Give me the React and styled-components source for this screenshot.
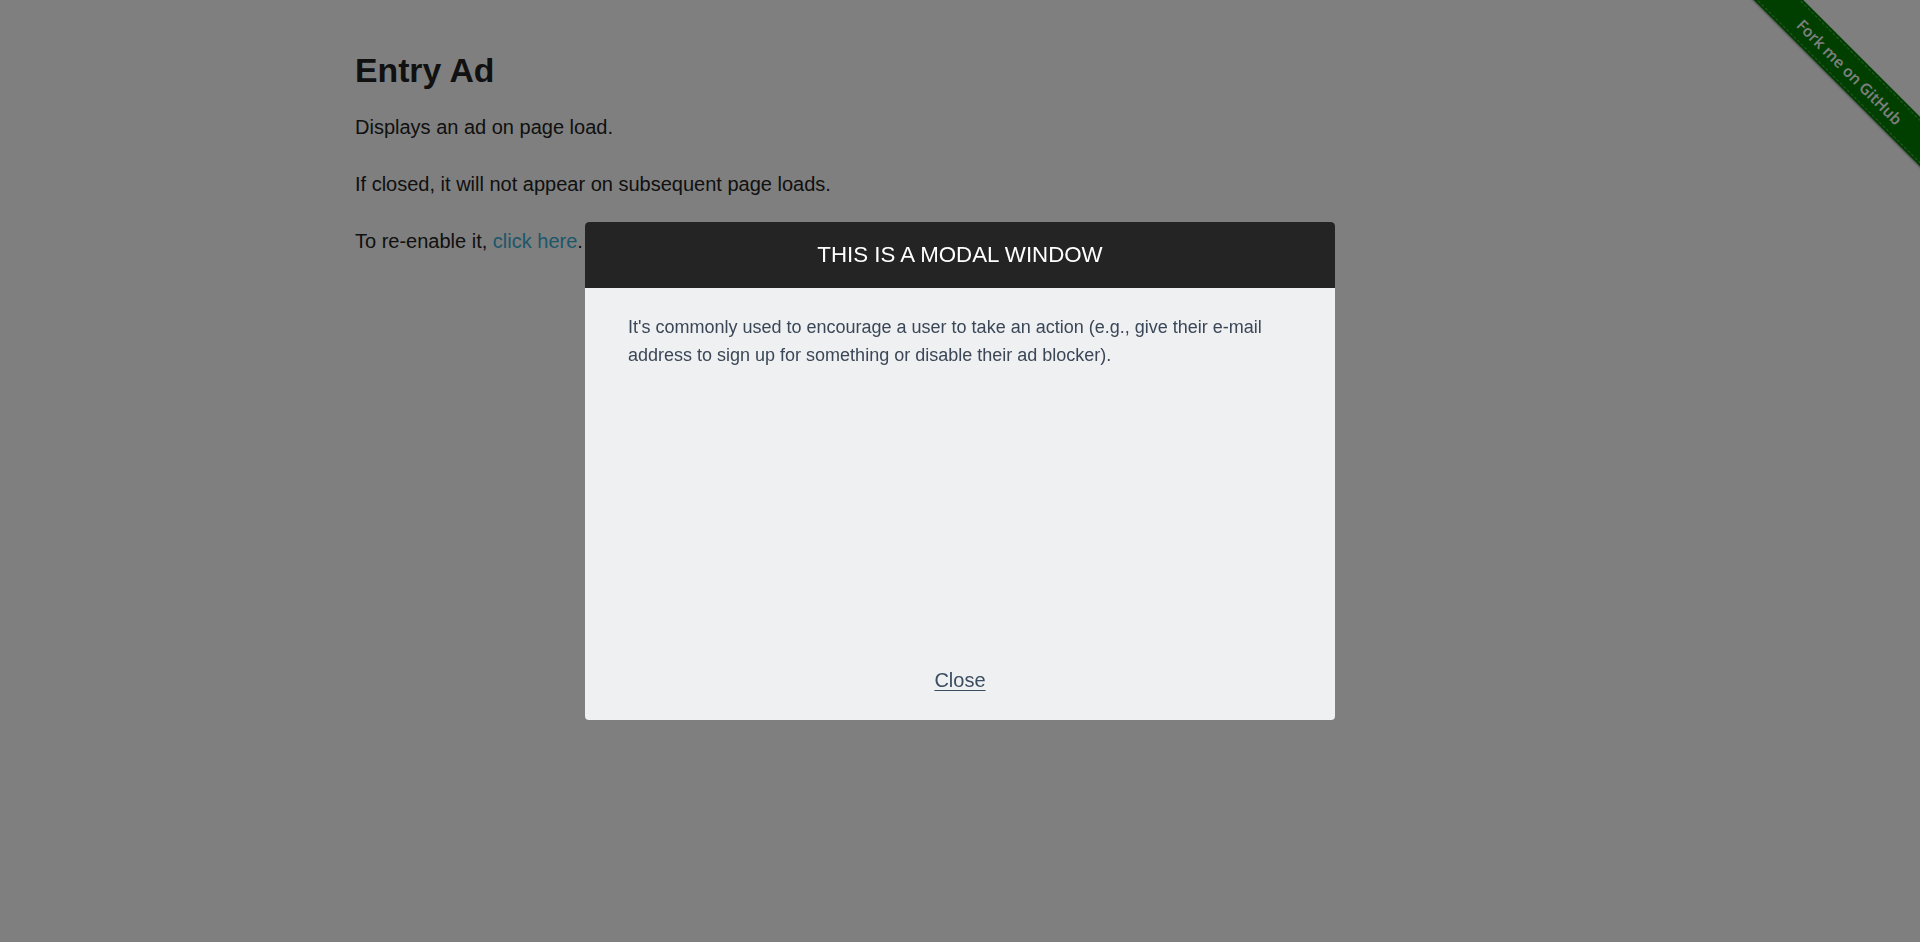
import React, { useState } from "react";
import styled, { createGlobalStyle } from "styled-components";

const GlobalStyle = createGlobalStyle`
  html, body {
    margin: 0;
    padding: 0;
    background: #ffffff;
    font-family: "Liberation Sans", Arial, Helvetica, sans-serif;
    color: #222222;
  }
`;

const Page = styled.div`
  min-height: 942px;
`;

const Content = styled.div`
  width: 1210px;
  margin: 0 auto;
  padding-top: 47px;
`;

const Title = styled.h3`
  margin: 0 0 17px;
  font-size: 33.75px;
  line-height: 1.4;
  font-weight: bold;
  color: #222222;
`;

const Text = styled.p`
  margin: 0 0 25px;
  font-size: 20px;
  line-height: 32px;
`;

const TextLink = styled.a`
  color: #3aaed4;
  text-decoration: none;
  cursor: pointer;
`;

const RibbonCorner = styled.a`
  position: absolute;
  top: 0;
  right: 0;
  width: 186px;
  height: 186px;
  overflow: hidden;
  text-decoration: none;
`;

const RibbonBand = styled.div`
  position: absolute;
  left: -14px;
  top: 54px;
  width: 260px;
  height: 35px;
  transform: rotate(45deg);
  background: #007e00;
  color: #ffffff;
  font-family: "Open Sans", "Liberation Sans", sans-serif;
  font-size: 15.5px;
  font-weight: 600;
  display: flex;
  align-items: center;
  justify-content: center;
  box-shadow: 0 1px 2px rgba(0, 0, 0, 0.4);

  &::before {
    content: "";
    position: absolute;
    left: 0;
    right: 0;
    top: 2px;
    bottom: 2px;
    border-top: 1px dashed rgba(255, 255, 255, 0.35);
    border-bottom: 1px dashed rgba(255, 255, 255, 0.35);
  }
`;

const Overlay = styled.div`
  position: fixed;
  inset: 0;
  background: rgba(0, 0, 0, 0.5);
  display: flex;
  align-items: center;
  justify-content: center;
`;

const Modal = styled.div`
  width: 750px;
  height: 498px;
  background: #eff0f2;
  border-radius: 4px;
  overflow: hidden;
  display: flex;
  flex-direction: column;
`;

const ModalHeader = styled.div`
  height: 66px;
  background: #242424;
  display: flex;
  align-items: center;
  justify-content: center;
`;

const ModalTitle = styled.h3`
  margin: 0;
  color: #ffffff;
  font-size: 22.3px;
  font-weight: normal;
`;

const ModalBody = styled.div`
  flex: 1;
  padding: 25px 43px 0;
`;

const ModalText = styled.p`
  margin: 0;
  font-size: 18px;
  line-height: 28px;
  color: #3b4757;
`;

const ModalFooter = styled.div`
  text-align: center;
  padding-bottom: 26px;
`;

const CloseText = styled.p`
  margin: 0;
  display: inline-block;
  font-size: 20px;
  line-height: 28px;
  color: #3a4c60;
  text-decoration: underline;
  text-decoration-thickness: 1px;
  text-underline-offset: 3px;
  cursor: pointer;
`;

export default function App() {
  const [open, setOpen] = useState(true);

  return (
    <Page>
      <GlobalStyle />
      <Content>
        <Title>Entry Ad</Title>
        <Text>Displays an ad on page load.</Text>
        <Text>If closed, it will not appear on subsequent page loads.</Text>
        <Text>
          To re-enable it, <TextLink onClick={() => setOpen(true)}>click here</TextLink>.
        </Text>
      </Content>

      <RibbonCorner href="#">
        <RibbonBand>Fork me on GitHub</RibbonBand>
      </RibbonCorner>

      {open && (
        <Overlay>
          <Modal>
            <ModalHeader>
              <ModalTitle>THIS IS A MODAL WINDOW</ModalTitle>
            </ModalHeader>
            <ModalBody>
              <ModalText>
                It's commonly used to encourage a user to take an action (e.g., give their e-mail
                address to sign up for something or disable their ad blocker).
              </ModalText>
            </ModalBody>
            <ModalFooter>
              <CloseText onClick={() => setOpen(false)}>Close</CloseText>
            </ModalFooter>
          </Modal>
        </Overlay>
      )}
    </Page>
  );
}
